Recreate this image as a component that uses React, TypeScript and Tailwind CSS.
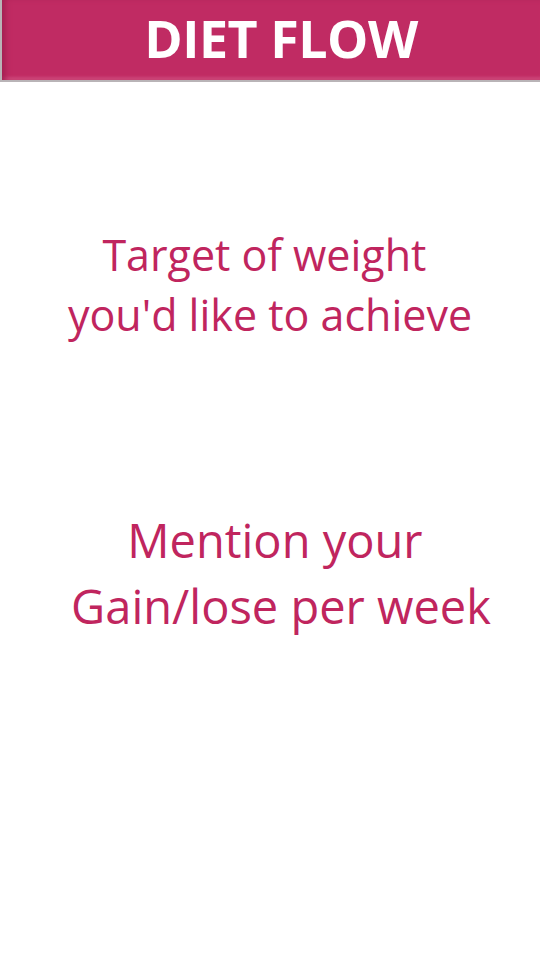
import React from "react";

const App: React.FC = () => {
  return (
    <div className="w-[540px] h-[960px] bg-white" style={{ fontFamily: '"Open Sans", "Noto Sans", sans-serif' }}>
      {/* Header */}
      <div className="h-[82px] border-b-2 border-l-2 border-[#b9b4b7] bg-[#c02b63] shadow-[inset_6px_0_6px_-3px_#a01f50,inset_0_-5px_3px_-2px_#d04a7c] flex items-center justify-center pl-[20px]">
        <h1 className="text-white font-bold text-[52px] leading-none tracking-[-0.5px] -mt-1">DIET FLOW</h1>
      </div>

      {/* Prompts */}
      <div className="flex flex-col items-center text-[#c0255e]">
        <p className="mt-[143px] text-center text-[43px] leading-[60px] whitespace-pre">
          {"Target of weight \nyou'd like to achieve"}
        </p>
        <p className="mt-[162px] pl-[22px] text-center text-[47px] leading-[66px] whitespace-pre">
          {"Mention your \nGain/lose per week"}
        </p>
      </div>
    </div>
  );
};

export default App;
